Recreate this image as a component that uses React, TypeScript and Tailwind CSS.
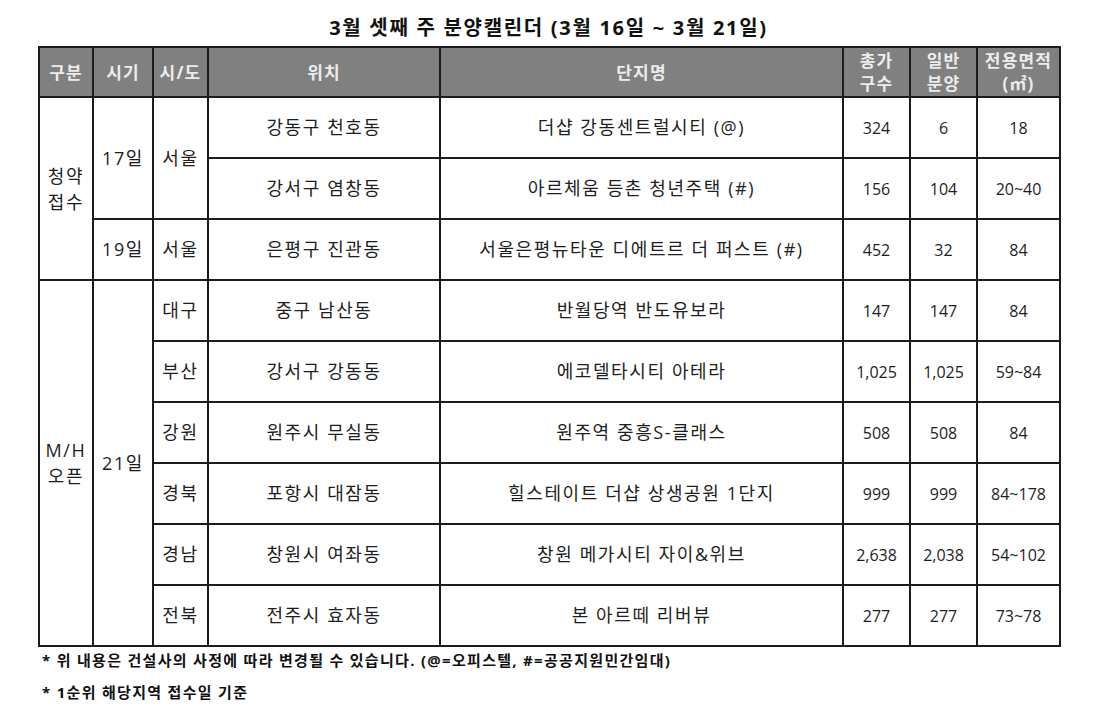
import React from "react";

const font = { fontFamily: '"Open Sans", "Noto Sans CJK KR", sans-serif' };

type Row = {
  region: string;
  loc: string;
  name: string;
  total: string;
  general: string;
  area: string;
};

const base = "border-2 border-[#1c1c1c] text-center align-middle p-0";
const ko = base + " text-[18px] tracking-[1.6px]";
const num = base + " text-[16px]";

export default function App() {
  const mh: Row[] = [
    { region: "대구", loc: "중구 남산동", name: "반월당역 반도유보라", total: "147", general: "147", area: "84" },
    { region: "부산", loc: "강서구 강동동", name: "에코델타시티 아테라", total: "1,025", general: "1,025", area: "59~84" },
    { region: "강원", loc: "원주시 무실동", name: "원주역 중흥S-클래스", total: "508", general: "508", area: "84" },
    { region: "경북", loc: "포항시 대잠동", name: "힐스테이트 더샵 상생공원 1단지", total: "999", general: "999", area: "84~178" },
    { region: "경남", loc: "창원시 여좌동", name: "창원 메가시티 자이&위브", total: "2,638", general: "2,038", area: "54~102" },
    { region: "전북", loc: "전주시 효자동", name: "본 아르떼 리버뷰", total: "277", general: "277", area: "73~78" },
  ];

  const th =
    "border-2 border-[#1c1c1c] bg-[#808080] text-[#ececec] font-bold text-[17px] tracking-[1.2px] text-center align-middle p-0 leading-[23px]";

  return (
    <div className="w-[1104px] h-[725px] bg-white text-[#1e1e1e]" style={font}>
      <div className="pl-[38px] w-[1059px]">
        <div className="h-[46px] flex items-end justify-center pb-[5px]">
          <h1 className="text-[20px] tracking-[1.7px] font-bold leading-[26px] text-[#111]">
            3월 셋째 주 분양캘린더 (3월 16일 ~ 3월 21일)
          </h1>
        </div>
        <table className="border-collapse table-fixed w-[1021px]">
          <colgroup>
            <col className="w-[54px]" />
            <col className="w-[60px]" />
            <col className="w-[55px]" />
            <col className="w-[232px]" />
            <col className="w-[403px]" />
            <col className="w-[67px]" />
            <col className="w-[67px]" />
            <col className="w-[83px]" />
          </colgroup>
          <thead>
            <tr className="h-[50px]">
              <th className={th}>구분</th>
              <th className={th}>시기</th>
              <th className={th}>시/도</th>
              <th className={th}>위치</th>
              <th className={th}>단지명</th>
              <th className={th}>총가<br />구수</th>
              <th className={th}>일반<br />분양</th>
              <th className={th}>전용면적<br />(㎡)</th>
            </tr>
          </thead>
          <tbody>
            <tr className="h-[61px]">
              <td rowSpan={3} className={ko + " leading-[26px]"}>청약<br />접수</td>
              <td rowSpan={2} className={ko}>17일</td>
              <td rowSpan={2} className={ko}>서울</td>
              <td className={ko}>강동구 천호동</td>
              <td className={ko}>더샵 강동센트럴시티 (@)</td>
              <td className={num}>324</td>
              <td className={num}>6</td>
              <td className={num}>18</td>
            </tr>
            <tr className="h-[61px]">
              <td className={ko}>강서구 염창동</td>
              <td className={ko}>아르체움 등촌 청년주택 (#)</td>
              <td className={num}>156</td>
              <td className={num}>104</td>
              <td className={num}>20~40</td>
            </tr>
            <tr className="h-[61px]">
              <td className={ko}>19일</td>
              <td className={ko}>서울</td>
              <td className={ko}>은평구 진관동</td>
              <td className={ko}>서울은평뉴타운 디에트르 더 퍼스트 (#)</td>
              <td className={num}>452</td>
              <td className={num}>32</td>
              <td className={num}>84</td>
            </tr>
            {mh.map((r, i) => (
              <tr key={r.region} className="h-[61px]">
                {i === 0 && (
                  <>
                    <td rowSpan={6} className={ko + " leading-[26px]"}>M/H<br />오픈</td>
                    <td rowSpan={6} className={ko}>21일</td>
                  </>
                )}
                <td className={ko}>{r.region}</td>
                <td className={ko}>{r.loc}</td>
                <td className={ko}>{r.name}</td>
                <td className={num}>{r.total}</td>
                <td className={num}>{r.general}</td>
                <td className={num}>{r.area}</td>
              </tr>
            ))}
          </tbody>
        </table>
        <div className="pl-[4px] pt-[3px] text-[15px] tracking-[1.3px] font-bold text-[#111] leading-[20px] flex flex-col gap-[12px]">
          <p>* 위 내용은 건설사의 사정에 따라 변경될 수 있습니다. (@=오피스텔, #=공공지원민간임대)</p>
          <p>* 1순위 해당지역 접수일 기준</p>
        </div>
      </div>
    </div>
  );
}
